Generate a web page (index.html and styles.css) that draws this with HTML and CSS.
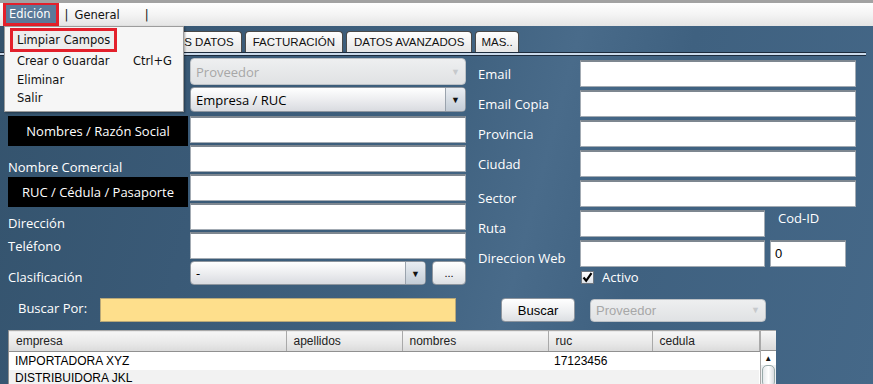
FILE: index.html
```html
<!DOCTYPE html>
<html lang="es">
<head>
    <meta charset="UTF-8">
    <title>Clientes / Proveedores</title>
    <link rel="stylesheet" href="styles.css">
</head>
<body>
    <div class="app">
        <div class="menubar">
            <span class="menu active">Edición</span>
            <span class="sep">|</span>
            <span class="menu">General</span>
            <span class="sep">|</span>
        </div>

        <div class="workspace">
            <div class="tabs">
                <div class="tab">OTROS DATOS</div>
                <div class="tab">FACTURACIÓN</div>
                <div class="tab">DATOS AVANZADOS</div>
                <div class="tab">MAS..</div>
            </div>
            <div class="tabline"></div>

            <div class="form">
                <div class="col-left">
                    <span></span>
                    <div class="combo disabled"><span class="combo-text">Proveedor</span><span class="arrow">&#9660;</span></div>

                    <span></span>
                    <div class="combo short"><span class="combo-text">Empresa / RUC</span><span class="arrow">&#9660;</span></div>

                    <div class="tag">Nombres / Razón Social</div>
                    <div class="input"></div>

                    <div class="lbl lbl-low">Nombre Comercial</div>
                    <div class="input"></div>

                    <div class="tag tag-low">RUC / Cédula / Pasaporte</div>
                    <div class="input"></div>

                    <div class="lbl lbl-low lbl-addr">Dirección</div>
                    <div class="input"></div>

                    <div class="lbl">Teléfono</div>
                    <div class="input"></div>

                    <div class="lbl lbl-mid">Clasificación</div>
                    <div class="field-row">
                        <div class="combo short"><span class="combo-text">-</span><span class="arrow">&#9660;</span></div>
                        <button class="btn btn-dots">...</button>
                    </div>
                </div>

                <div class="col-right">
                    <div class="rrow"><div class="rlbl">Email</div><div class="input wide"></div></div>
                    <div class="rrow"><div class="rlbl">Email Copia</div><div class="input wide"></div></div>
                    <div class="rrow"><div class="rlbl">Provincia</div><div class="input wide"></div></div>
                    <div class="rrow"><div class="rlbl">Ciudad</div><div class="input wide"></div></div>
                    <div class="rrow"><div class="rlbl rlbl-low">Sector</div><div class="input wide"></div></div>
                    <div class="rrow">
                        <div class="rlbl rlbl-low">Ruta</div>
                        <div class="input half"></div>
                        <div class="codid">Cod-ID</div>
                    </div>
                    <div class="rrow">
                        <div class="rlbl rlbl-low">Direccion Web</div>
                        <div class="input half"></div>
                        <div class="input code">0</div>
                    </div>
                    <label class="check">
                        <span class="box">
                            <svg width="11" height="11" viewBox="0 0 11 11"><path d="M1.5 5.5 L4.2 8.8 L9.5 1.2" fill="none" stroke="#000" stroke-width="2.2"/></svg>
                        </span>
                        Activo
                    </label>
                </div>
            </div>

            <div class="search">
                <div class="search-lbl">Buscar Por:</div>
                <div class="search-input"></div>
                <button class="btn btn-search">Buscar</button>
                <div class="combo disabled search-combo"><span class="combo-text">Proveedor</span><span class="arrow">&#9660;</span></div>
            </div>

            <div class="results">
                <table class="results-table">
                    <colgroup>
                        <col style="width: 277px">
                        <col style="width: 116px">
                        <col style="width: 146px">
                        <col style="width: 104px">
                        <col style="width: 107px">
                    </colgroup>
                    <thead>
                        <tr><th>empresa</th><th>apellidos</th><th>nombres</th><th>ruc</th><th>cedula</th></tr>
                    </thead>
                    <tbody>
                        <tr><td>IMPORTADORA XYZ</td><td></td><td></td><td>17123456</td><td></td></tr>
                        <tr class="alt"><td>DISTRIBUIDORA JKL</td><td></td><td></td><td></td><td></td></tr>
                    </tbody>
                </table>
                <div class="vscroll">
                    <div class="corner"></div>
                    <div class="up">&#9650;</div>
                    <div class="thumb"></div>
                </div>
            </div>
        </div>

        <div class="dropdown">
            <div class="item hl">Limpiar Campos</div>
            <div class="item"><span>Crear o Guardar</span><span>Ctrl+G</span></div>
            <div class="item">Eliminar</div>
            <div class="item">Salir</div>
        </div>
    </div>
</body>
</html>
```

FILE: styles.css
```css
body {
    margin: 0;
    padding: 0;
    background-color: #3d5f7c;
}
.app {
    position: relative;
    width: 873px;
    height: 384px;
    overflow: hidden;
    font-family: 'Open Sans', sans-serif;
}

/* menu bar */
.menubar {
    height: 23px;
    border-top: 3px solid #a2a2a2;
    background: linear-gradient(#ffffff, #f4f4f4 50%, #e4e4e4);
    display: flex;
    align-items: stretch;
    padding-left: 3px;
    font-family: 'DejaVu Sans', sans-serif;
    font-size: 11.5px;
    color: #111;
}
.menu {
    display: flex;
    align-items: center;
}
.menu.active {
    background-color: #5b7a99;
    color: #fff;
    border: 3px solid #e3202b;
    border-top-width: 2px;
    padding: 0 5px 0 3px;
}
.sep {
    display: flex;
    align-items: center;
    margin: 0 6px 0 6px;
}
.sep:last-child {
    margin-left: 25px;
}

/* workspace */
.workspace {
    height: 358px;
    background: linear-gradient(105deg, #34536d 0%, #3a5a77 25%, #3f617f 48%, #496b8a 60%, #3f6180 72%, #456888 100%);
}
.tabs {
    display: flex;
    padding-top: 5px;
    padding-left: 143px;
    height: 21px;
    font-family: 'Liberation Sans', sans-serif;
    font-size: 11.5px;
}
.tab {
    display: flex;
    align-items: center;
    padding: 0 7px;
    margin-right: 3px;
    background: linear-gradient(#ffffff, #e6e6e6);
    border: 1px solid #4a4a4a;
    border-bottom: none;
    border-radius: 4px 4px 0 0;
    color: #111;
}
.tab:last-child {
    padding: 0 5px;
}
.tabline {
    width: 866px;
    height: 2px;
    background-color: #c9d9ea;
    border-top: 1px solid #1c2b3c;
    border-bottom: 1px solid #1c2b3c;
}

/* form */
.form {
    display: flex;
    margin-top: 2px;
    height: 230px;
}
.col-left {
    margin-left: 8px;
    display: grid;
    grid-template-columns: 180px 276px;
    grid-auto-rows: 27px;
    column-gap: 2px;
    row-gap: 2px;
}
.col-right {
    margin-left: 12px;
    padding-top: 2px;
}
.lbl, .rlbl {
    color: #fff;
    font-size: 13px;
    display: flex;
    align-items: center;
}
.lbl-low {
    align-items: flex-end;
    margin-bottom: -4px;
}
.lbl-addr {
    margin-bottom: -2px;
}
.lbl-mid {
    padding-top: 4px;
}
.tag {
    background-color: #000;
    color: #fff;
    font-size: 13px;
    height: 30px;
    display: flex;
    align-items: center;
    justify-content: center;
}
.tag-low {
    margin-top: 3px;
}
.input {
    background-color: #fff;
    border: 1px solid #a3abb3;
    border-top: 2px solid #7e8790;
    box-sizing: border-box;
    height: 27px;
    font-family: 'Liberation Sans', sans-serif;
    font-size: 13px;
}
.combo {
    display: flex;
    align-items: center;
    box-sizing: border-box;
    height: 27px;
    border: 1px solid #8d959e;
    border-radius: 4px;
    background: linear-gradient(#ffffff, #e9eaed 60%, #d9dbe0);
    font-size: 13px;
    color: #000;
    overflow: hidden;
}
.combo.short {
    height: 25px;
}
.combo-text {
    flex: 1;
    padding-left: 5px;
}
.arrow {
    width: 19px;
    align-self: stretch;
    display: flex;
    align-items: center;
    justify-content: center;
    font-size: 9px;
    border-left: 1px solid #9aa3ad;
    background: linear-gradient(#e9edf2, #c3ccd6);
    color: #111;
}
.combo.disabled {
    background: linear-gradient(#eeeff0, #e0e2e4);
    border-color: #bcc1c6;
    color: #a7a7a7;
}
.combo.disabled .arrow {
    background: none;
    border-left: none;
    color: #c6c9cc;
}
.field-row {
    display: flex;
    gap: 6px;
    height: 24px;
}
.field-row .combo {
    flex: 1;
    height: 24px;
}
.btn {
    box-sizing: border-box;
    border: 1px solid #8d959e;
    border-radius: 4px;
    background: linear-gradient(#ffffff, #eceef0 60%, #dcdfe3);
    font-family: 'Liberation Sans', sans-serif;
    font-size: 13px;
    color: #000;
    padding: 0;
    height: 24px;
}
.btn-dots {
    width: 34px;
    font-size: 11px;
}

/* right column */
.rrow {
    display: flex;
    height: 27px;
    margin-bottom: 3px;
}
.rlbl {
    width: 102px;
}
.rlbl-low {
    align-items: flex-end;
    margin-bottom: 0;
}
.input.wide {
    width: 276px;
}
.input.half {
    width: 185px;
}
.input.code {
    width: 76px;
    margin-left: 5px;
    padding-left: 4px;
    line-height: 24px;
}
.codid {
    color: #fff;
    font-size: 13px;
    margin-left: 13px;
    margin-top: -1px;
}
.check {
    display: flex;
    align-items: center;
    gap: 8px;
    margin-left: 103px;
    margin-top: -1px;
    color: #fff;
    font-size: 13px;
    height: 16px;
}
.box {
    width: 11px;
    height: 11px;
    background: linear-gradient(#ffffff, #dde2e8);
    border: 1px solid #6d7680;
    display: flex;
}

/* search */
.search {
    display: flex;
    align-items: center;
    height: 24px;
    margin-top: 10px;
}
.search-lbl {
    color: #fff;
    font-size: 13px;
    width: 82px;
    margin-left: 18px;
    margin-top: -4px;
}
.search-input {
    width: 356px;
    height: 24px;
    box-sizing: border-box;
    background-color: #fedf8c;
    border: 1px solid #b9a878;
}
.btn-search {
    width: 74px;
    margin-left: 45px;
}
.search-combo {
    width: 176px;
    height: 23px;
    margin-left: 15px;
    font-family: 'Liberation Sans', sans-serif;
}

/* results table */
.results {
    display: flex;
    margin: 8px 0 0 8px;
    width: 767px;
    background-color: #fff;
    border-left: 1px solid #8f8f8f;
}
.results-table {
    border-collapse: collapse;
    table-layout: fixed;
    width: 750px;
    font-family: 'Liberation Sans', sans-serif;
    font-size: 12px;
    color: #000;
}
.results-table th {
    height: 20px;
    padding: 0 0 0 7px;
    text-align: left;
    font-weight: normal;
    color: #222;
    background: linear-gradient(#f6f6f6, #e8e8e8 60%, #dadada);
    border-right: 1px solid #a9a9a9;
    border-top: 1px solid #a9a9a9;
    border-bottom: 1px solid #909090;
}
.results-table td {
    height: 16px;
    padding: 0 0 0 6px;
    white-space: nowrap;
}
.results-table tr.alt td {
    background-color: #f2f2f2;
}
.vscroll {
    width: 16px;
    border-left: 1px solid #a9a9a9;
    background-color: #eef0f2;
}
.vscroll .corner {
    height: 21px;
    box-sizing: border-box;
    border-top: 1px solid #a9a9a9;
    border-bottom: 1px solid #909090;
    background: linear-gradient(#f6f6f6, #dadada);
}
.vscroll .up {
    height: 14px;
    font-size: 8px;
    text-align: center;
    line-height: 14px;
    color: #111;
    background-color: #fff;
}
.vscroll .thumb {
    height: 20px;
    margin: 0 1px;
    border: 1px solid #9aa;
    border-radius: 5px;
    background: linear-gradient(90deg, #e6e9ec, #ffffff, #d8dce0);
}

/* dropdown menu */
.dropdown {
    position: absolute;
    left: 4px;
    top: 26px;
    width: 178px;
    height: 84px;
    background-color: #f6f6f6;
    border: 1px solid #9c9c9c;
    box-shadow: 1px 1px 2px rgba(0, 0, 0, 0.35);
    font-family: 'DejaVu Sans', sans-serif;
    font-size: 11.5px;
    color: #111;
}
.item {
    line-height: 18.5px;
    padding: 0 11px 0 12px;
    display: flex;
    justify-content: space-between;
}
.item.hl {
    display: inline-block;
    margin: 1px 0 0 5px;
    padding: 0 4px;
    height: 18px;
    line-height: 18px;
    border: 3px solid #e3202b;
    background-color: #ededed;
}
```
